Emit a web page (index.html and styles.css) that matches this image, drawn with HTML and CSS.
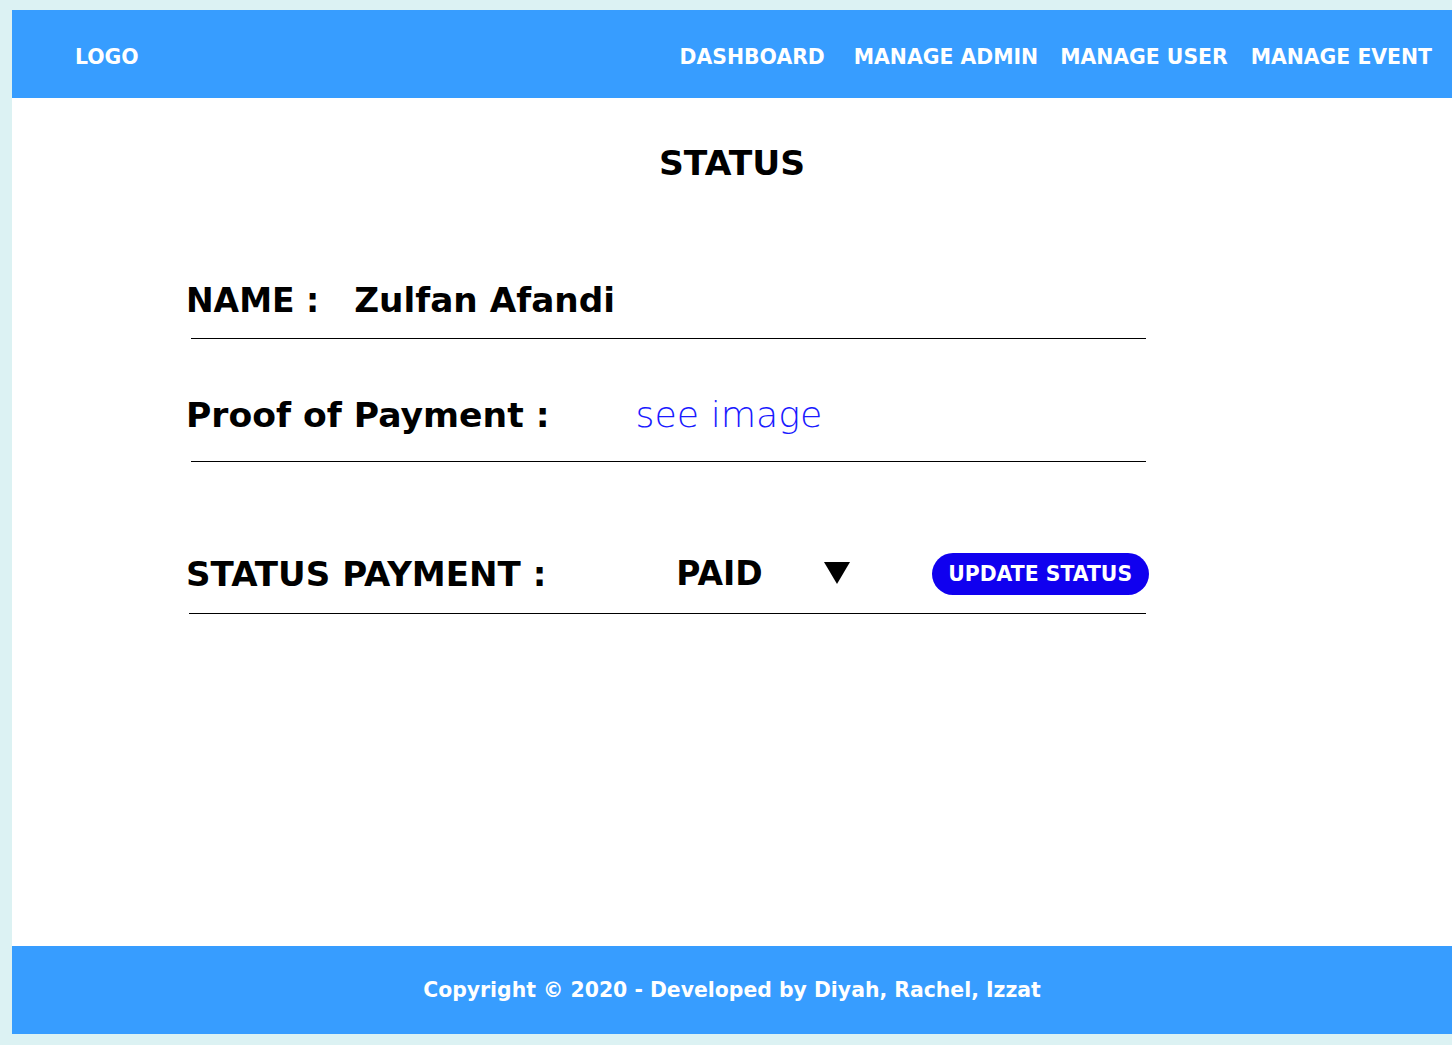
FILE: index.html
```html
<!DOCTYPE html>
<html>
<head>
<meta charset="utf-8">
<link rel="stylesheet" href="styles.css">
</head>
<body>
<div class="page">
  <header class="topbar">
    <div class="logo">LOGO</div>
    <nav class="nav">
      <a class="nav-link nav-first">DASHBOARD</a>
      <a class="nav-link nav-second">MANAGE ADMIN</a>
      <a class="nav-link">MANAGE USER</a>
      <a class="nav-link">MANAGE EVENT</a>
    </nav>
  </header>
  <main class="main">
    <h1 class="title">STATUS</h1>
    <div class="form">
      <div class="row row-name">
        <span class="label">NAME :</span>
        <span class="value">Zulfan Afandi</span>
      </div>
      <div class="row row-proof">
        <span class="label">Proof of Payment :</span>
        <a class="link">see image</a>
      </div>
      <div class="row row-status">
        <span class="label">STATUS PAYMENT :</span>
        <span class="select">
          <span class="select-value">PAID</span>
          <svg class="arrow" width="26" height="22" viewBox="0 0 26 22"><polygon points="0,0 26,0 13,22" fill="#000"/></svg>
        </span>
        <button class="btn">UPDATE STATUS</button>
      </div>
    </div>
  </main>
  <footer class="footer">Copyright © 2020 - Developed by Diyah, Rachel, Izzat</footer>
</div>
</body>
</html>
```
FILE: styles.css
```css
body {
  margin: 10px 0 0 12px;
  background: #dcf2f3;
  font-family: "DejaVu Sans", "Noto Sans", sans-serif;
  color: #000;
}
.page {
  background: #fff;
  display: flex;
  flex-direction: column;
  height: 1024px;
}
.topbar {
  background: #379dff;
  height: 88px;
  box-sizing: border-box;
  display: flex;
  align-items: center;
  padding: 5px 0 0 63px;
  color: #fff;
  font-size: 20.4px;
  font-weight: 700;
  flex: none;
}
.nav {
  margin-left: auto;
  display: flex;
  gap: 23px;
  padding-right: 20px;
}
.nav-first {
  margin-right: 6px;
}
.nav-second {
  margin-right: -1px;
}
.main {
  flex: 1;
}
.title {
  margin: 0;
  padding-top: 45px;
  text-align: center;
  font-size: 34.5px;
  font-weight: 700;
  line-height: 40px;
}
.form {
  margin-left: 179px;
  width: 955px;
}
.row {
  display: flex;
  align-items: baseline;
  border-bottom: 1px solid #000;
  font-size: 34.3px;
  font-weight: 700;
  line-height: 40px;
  white-space: nowrap;
}
.row > * {
  flex-shrink: 0;
}
.label {
  margin-left: -5px;
}
.row-name {
  margin-top: 97px;
  padding-bottom: 17px;
}
.row-name .label {
  font-size: 33px;
}
.row-name .value {
  margin-left: 35px;
}
.row-proof {
  margin-top: 56px;
  padding-bottom: 26px;
}
.row-proof .label {
  font-size: 34.6px;
}
.link {
  margin-left: 86px;
  color: #1a1aff;
  font-size: 36.3px;
  font-weight: 200;
}
.row-status {
  margin-top: 91px;
  margin-left: -2px;
  width: 957px;
  padding-bottom: 18px;
  align-items: center;
}
.row-status .label {
  margin-left: -3px;
  font-size: 34.1px;
}
.select {
  display: flex;
  align-items: center;
  margin-left: 130px;
}
.select-value {
  font-size: 33px;
}
.arrow {
  display: block;
  margin-left: 61px;
  margin-top: -2px;
}
.btn {
  margin-left: 82px;
  background: #1000ef;
  color: #fff;
  border: none;
  border-radius: 21px;
  height: 42px;
  width: 217px;
  padding: 0;
  font-family: inherit;
  font-size: 20.4px;
  font-weight: 700;
}
.footer {
  flex: none;
  background: #379dff;
  height: 88px;
  display: flex;
  align-items: center;
  justify-content: center;
  color: #fff;
  font-size: 20.4px;
  font-weight: 700;
}
```
